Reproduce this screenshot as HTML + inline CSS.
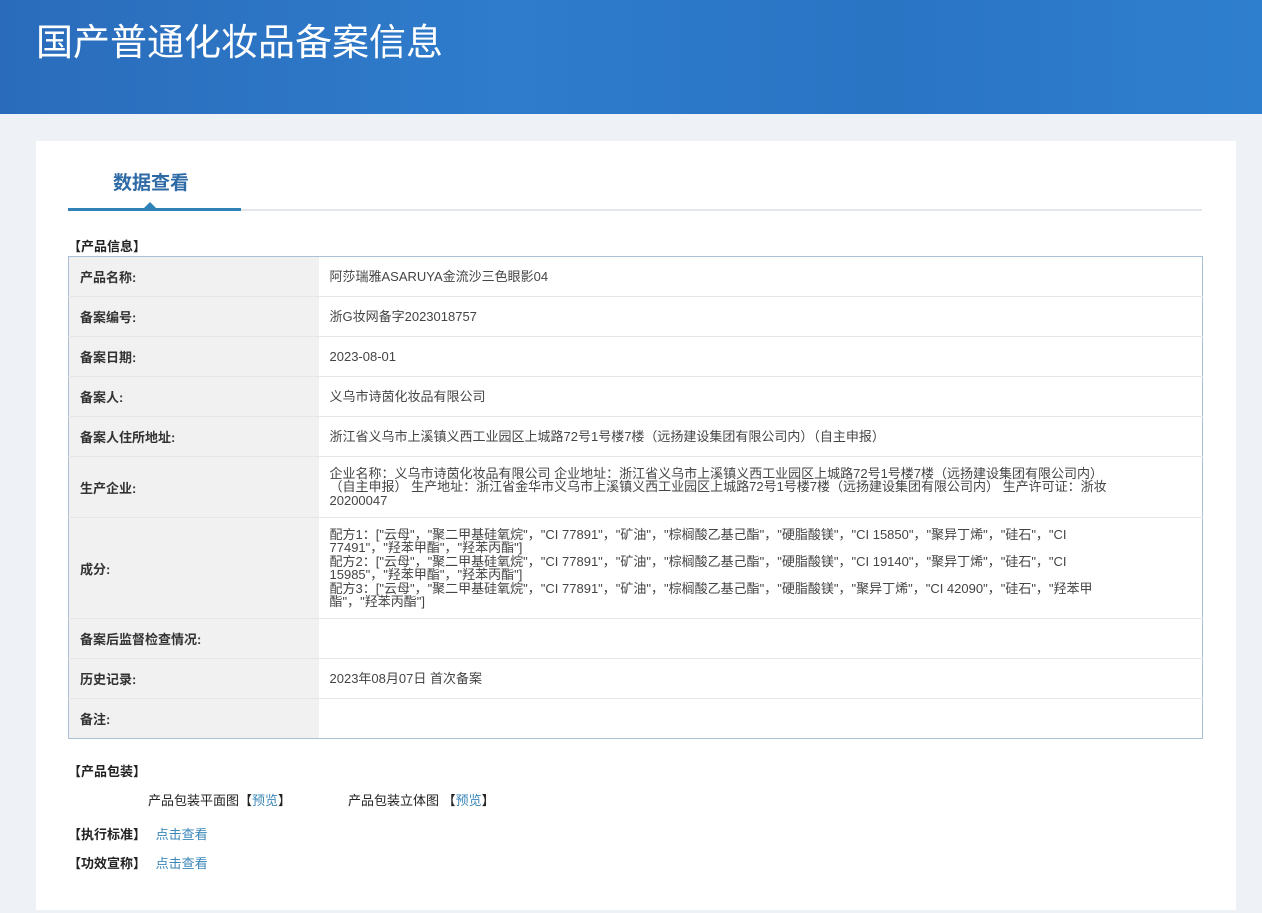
<!DOCTYPE html>
<html><head><meta charset="utf-8">
<style>
*{margin:0;padding:0;box-sizing:border-box}
body{width:1262px;height:913px;overflow:hidden;background:#eef2f6;font-family:"Liberation Sans","Noto Sans CJK SC",sans-serif;color:#333;font-size:13px}
.hd{position:absolute;left:0;top:0;width:1262px;height:114px;background:linear-gradient(90deg,#2a6cbb 0%,#2f7ccc 40%,#2a74c4 70%,#2f7fcf 100%)}
.hd h1{position:absolute;left:36px;top:12px;font-size:37px;font-weight:normal;color:#fff;font-family:"Noto Sans CJK SC",sans-serif}
.card{position:absolute;left:36px;top:141px;width:1200px;height:769px;background:#fff}
.tab{position:absolute;left:77px;top:27px;font-size:19px;font-weight:bold;color:#2e6aa6}
.line{position:absolute;left:32px;top:68px;width:1134px;height:2px;background:#e3e6ea}
.line2{position:absolute;left:32px;top:67px;width:173px;height:3px;background:#2f81b8}
.tri{position:absolute;left:107px;top:61px;width:0;height:0;border-left:7px solid transparent;border-right:7px solid transparent;border-bottom:7px solid #2f81b8}
.sec{position:absolute;left:32px;font-weight:bold;color:#222;font-size:13px}
table{position:absolute;left:32px;top:115px;width:1135px;border-collapse:collapse;border:1px solid #a9c0d6}
td{border-bottom:1px solid #e6e6e6;padding:0 11px;height:40px;vertical-align:middle;font-size:13px}
td.l{width:250px;background:#f1f1f1;font-weight:bold;color:#333}
td.v{color:#444;line-height:13.5px}
.a{color:#3a86b9}
.p{position:absolute;font-size:13px;color:#222}
</style></head><body>
<div class="hd"><h1>国产普通化妆品备案信息</h1></div>
<div class="card">
<div class="tab">数据查看</div>
<div class="line"></div><div class="line2"></div><div class="tri"></div>
<div class="sec" style="top:95px">【产品信息】</div>
<table>
<tr><td class="l">产品名称:</td><td class="v">阿莎瑞雅ASARUYA金流沙三色眼影04</td></tr>
<tr><td class="l">备案编号:</td><td class="v">浙G妆网备字2023018757</td></tr>
<tr><td class="l">备案日期:</td><td class="v">2023-08-01</td></tr>
<tr><td class="l">备案人:</td><td class="v">义乌市诗茵化妆品有限公司</td></tr>
<tr><td class="l">备案人住所地址:</td><td class="v">浙江省义乌市上溪镇义西工业园区上城路72号1号楼7楼（远扬建设集团有限公司内）（自主申报）</td></tr>
<tr><td class="l" style="height:61px">生产企业:</td><td class="v"><div style="width:785px">企业名称：义乌市诗茵化妆品有限公司 企业地址：浙江省义乌市上溪镇义西工业园区上城路72号1号楼7楼（远扬建设集团有限公司内）（自主申报） 生产地址：浙江省金华市义乌市上溪镇义西工业园区上城路72号1号楼7楼（远扬建设集团有限公司内） 生产许可证：浙妆20200047</div></td></tr>
<tr><td class="l" style="height:101px">成分:</td><td class="v"><div style="width:810px">配方1：["云母"，"聚二甲基硅氧烷"，"CI 77891"，"矿油"，"棕榈酸乙基己酯"，"硬脂酸镁"，"CI 15850"，"聚异丁烯"，"硅石"，"CI 77491"，"羟苯甲酯"，"羟苯丙酯"]<br>配方2：["云母"，"聚二甲基硅氧烷"，"CI 77891"，"矿油"，"棕榈酸乙基己酯"，"硬脂酸镁"，"CI 19140"，"聚异丁烯"，"硅石"，"CI 15985"，"羟苯甲酯"，"羟苯丙酯"]<br>配方3：["云母"，"聚二甲基硅氧烷"，"CI 77891"，"矿油"，"棕榈酸乙基己酯"，"硬脂酸镁"，"聚异丁烯"，"CI 42090"，"硅石"，"羟苯甲酯"，"羟苯丙酯"]</div></td></tr>
<tr><td class="l">备案后监督检查情况:</td><td class="v"></td></tr>
<tr><td class="l">历史记录:</td><td class="v">2023年08月07日 首次备案</td></tr>
<tr><td class="l" style="border-bottom:none">备注:</td><td class="v" style="border-bottom:none"></td></tr>
</table>
<div class="sec" style="top:620px">【产品包装】</div>
<div class="p" style="left:112px;top:649px">产品包装平面图【<span class="a">预览</span>】</div>
<div class="p" style="left:312px;top:649px">产品包装立体图 【<span class="a">预览</span>】</div>
<div class="sec" style="top:683px">【执行标准】 <span class="a" style="font-weight:normal;margin-left:6px">点击查看</span></div>
<div class="sec" style="top:712px">【功效宣称】 <span class="a" style="font-weight:normal;margin-left:6px">点击查看</span></div>
</div>
</body></html>
